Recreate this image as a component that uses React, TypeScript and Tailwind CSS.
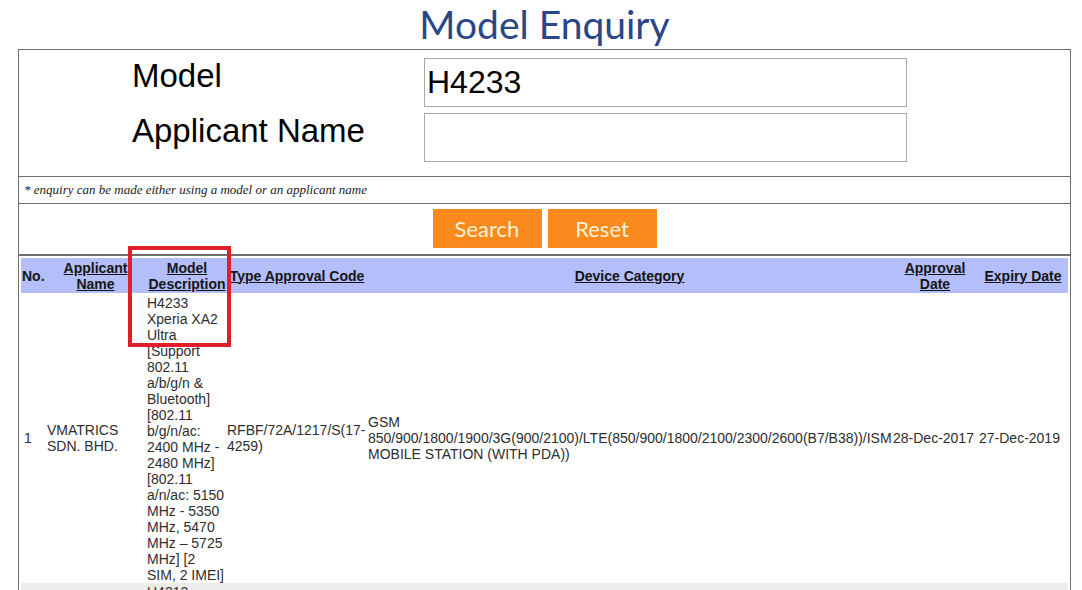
import React from 'react';

const modelDescription =
  'H4233 Xperia XA2 Ultra [Support 802.11 a/b/g/n & Bluetooth] [802.11 b/g/n/ac: 2400 MHz - 2480 MHz] [802.11 a/n/ac: 5150 MHz - 5350 MHz, 5470 MHz – 5725 MHz] [2 SIM, 2 IMEI]';

const headers = [
  { key: 'no', label: 'No.', width: 'w-[23px]', link: false },
  { key: 'applicant', label: 'Applicant Name', width: 'w-[103px]', link: true },
  { key: 'model', label: 'Model Description', width: 'w-[80px]', link: true },
  { key: 'code', label: 'Type Approval Code', width: 'w-[140px]', link: true },
  { key: 'category', label: 'Device Category', width: 'w-[525px]', link: true },
  { key: 'approval', label: 'Approval Date', width: 'w-[86px]', link: true },
  { key: 'expiry', label: 'Expiry Date', width: 'w-[90px]', link: true },
];

export default function App() {
  return (
    <div className="relative w-[1082px] h-[590px] overflow-hidden bg-white font-['Liberation_Sans',Arial,sans-serif]">
      {/* Title */}
      <div className="ml-[18px] mr-[11px] h-[49px] pt-[2px] text-center font-['Lato',sans-serif] text-[39px] leading-[45px] text-[#2b4589]">
        Model Enquiry
      </div>

      <div className="ml-[18px] mr-[11px] border-x border-t border-[#6e6e6e]">
        {/* Form fields */}
        <div className="grid grid-cols-[292px_483px] gap-y-[6px] pl-[113px] pt-[8px] pb-[14px] border-b border-[#6e6e6e]">
          <label className="-mt-[1px] text-[33px] leading-[38px] text-black">Model</label>
          <input
            readOnly
            value="H4233"
            className="h-[49px] border border-[#a9a9a9] px-[2px] text-[32px] text-black outline-none font-['Liberation_Sans',Arial,sans-serif]"
          />
          <label className="-mt-[1px] text-[33px] leading-[38px] text-black">Applicant Name</label>
          <input
            readOnly
            value=""
            className="h-[49px] border border-[#a9a9a9] px-[2px] text-[32px] text-black outline-none"
          />
        </div>

        {/* Note */}
        <div className="h-[27px] flex items-center pl-[5px] border-b border-[#6e6e6e] font-['Liberation_Serif',Georgia,serif] italic text-[13px] text-[#222]">
          * enquiry can be made either using a model or an applicant name
        </div>

        {/* Buttons */}
        <div className="flex justify-center gap-[6px] pt-[5px] pb-[6px] border-b-2 border-[#6e6e6e]">
          <button className="w-[109px] h-[39px] bg-[#fb8a1e] font-['Lato',sans-serif] text-[22px] text-[#fff1d6]">
            Search
          </button>
          <button className="w-[109px] h-[39px] bg-[#fb8a1e] font-['Lato',sans-serif] text-[22px] text-[#fff1d6]">
            Reset
          </button>
        </div>

        {/* Results */}
        <div className="p-[2px]">
          <table className="w-[1047px] table-fixed border-collapse text-[14px] leading-[16px]">
            <thead>
              <tr className="bg-[#b4befa] h-[35px]">
                {headers.map((h) => (
                  <th
                    key={h.key}
                    className={`${h.width} px-[1px] align-middle text-center font-bold text-[#151515] ${h.link ? 'underline' : ''}`}
                  >
                    {h.label}
                  </th>
                ))}
              </tr>
            </thead>
            <tbody className="text-[#2e2e2e]">
              <tr>
                <td className="px-[1px] pl-[3px] align-middle">1</td>
                <td className="px-[1px] pl-[3px] align-middle">VMATRICS SDN. BHD.</td>
                <td className="px-[0px] pt-[2px] align-middle">{modelDescription}</td>
                <td className="px-[0px] align-middle">RFBF/72A/1217/S(17-4259)</td>
                <td className="px-[1px] align-middle whitespace-nowrap">
                  GSM
                  <br />
                  850/900/1800/1900/3G(900/2100)/LTE(850/900/1800/2100/2300/2600(B7/B38))/ISM
                  <br />
                  MOBILE STATION (WITH PDA))
                </td>
                <td className="px-[1px] align-middle">28-Dec-2017</td>
                <td className="px-[1px] align-middle">27-Dec-2019</td>
              </tr>
              <tr className="bg-[#ececec]">
                <td className="px-[1px] pl-[3px] align-middle">2</td>
                <td className="px-[1px] pl-[3px] align-middle">VMATRICS SDN. BHD.</td>
                <td className="px-[0px] pt-[1px] align-top">H4213 Xperia XA2 Ultra</td>
                <td className="px-[0px] align-middle">RFBF/72A/1217/S(17-4260)</td>
                <td className="px-[1px] align-middle">GSM</td>
                <td className="px-[1px] align-middle">28-Dec-2017</td>
                <td className="px-[1px] align-middle">27-Dec-2019</td>
              </tr>
            </tbody>
          </table>
        </div>
      </div>

      {/* Red highlight annotation */}
      <div className="absolute left-[128px] top-[246px] w-[103px] h-[101px] border-[4px] border-[#e11f2a]" />
    </div>
  );
}
